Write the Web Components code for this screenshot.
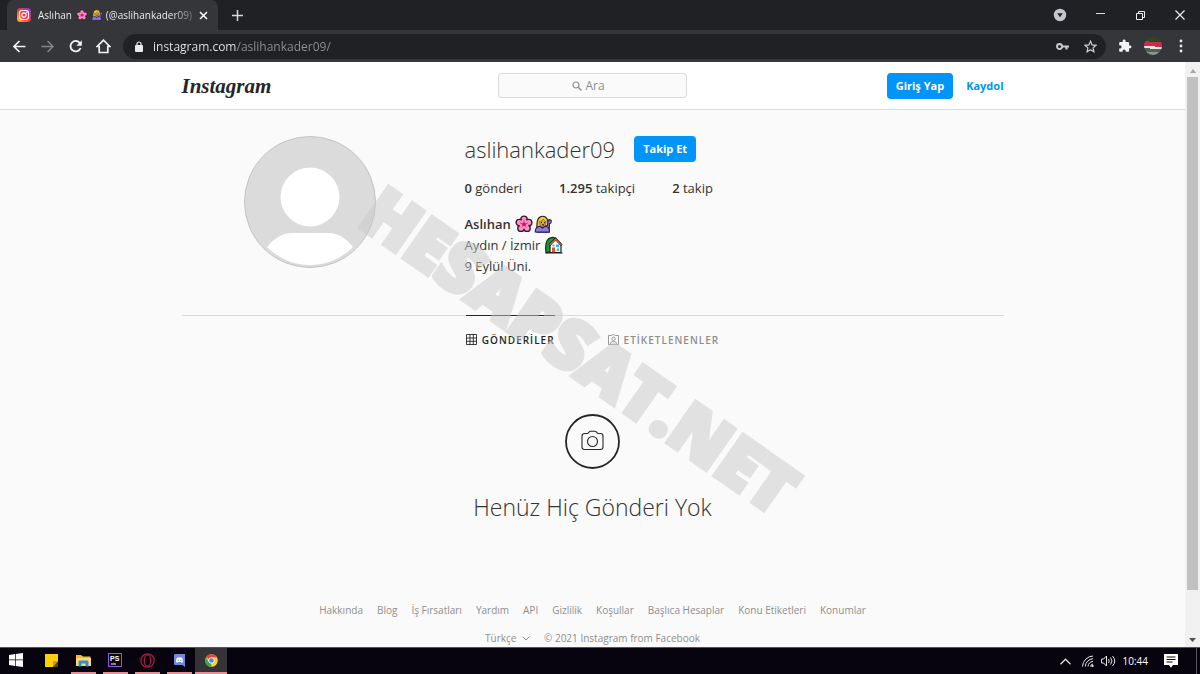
<!DOCTYPE html>
<html lang="tr">
<head>
<meta charset="utf-8">
<title>Aslıhan (@aslihankader09)</title>
<style>
html, body { margin: 0; height: 100%; }
body { font-family: "Open Sans", "Noto Sans", sans-serif; font-size: 13px; color: #333; }
</style>
</head>
<body>
<desktop-shell>
  <browser-tabs slot="top"></browser-tabs>
  <browser-toolbar slot="top"></browser-toolbar>
  <web-view>
    <ig-header></ig-header>
    <ig-profile></ig-profile>
    <ig-tabs></ig-tabs>
    <empty-state>Henüz Hiç Gönderi Yok</empty-state>
    <ig-footer></ig-footer>
    <water-mark slot="overlay">HESAPSAT.NET</water-mark>
  </web-view>
  <task-bar slot="bottom"></task-bar>
</desktop-shell>
<script>
const define = (name, markup) => {
  const template = document.createElement('template');
  template.innerHTML = '<style>*{box-sizing:border-box}svg{display:block;flex:none}button,input,select{font-family:inherit}a{text-decoration:none;color:inherit}</style>' + markup;
  customElements.define(name, class extends HTMLElement {
    constructor() {
      super();
      this.attachShadow({ mode: 'open' }).append(template.content.cloneNode(true));
    }
  });
};

define('desktop-shell', `
<style>
:host{display:flex;flex-direction:column;height:100vh;overflow:hidden}
main{flex:1;min-height:0;display:flex}
</style>
<slot name="top"></slot><main><slot></slot></main><slot name="bottom"></slot>`);

const emoji = {
  flower: `<svg viewBox="0 0 18 18" width="100%" height="100%"><g fill="#f990c8" stroke="#3a1a2c" stroke-width="1.4"><circle cx="9" cy="4.3" r="3.2"/><circle cx="13.7" cy="7.6" r="3.2"/><circle cx="12" cy="13.2" r="3.2"/><circle cx="6" cy="13.2" r="3.2"/><circle cx="4.3" cy="7.6" r="3.2"/></g><circle cx="9" cy="9.2" r="4.6" fill="#f990c8"/><circle cx="9" cy="9.2" r="2" fill="#e0115f"/><path d="M9 5v2M13 8l-2 .7M11.500 12.500l-1.200-1.600M6.500 12.500l1.200-1.600M5 8l2 .7" stroke="#e0408f"/></svg>`,
  woman: `<svg viewBox="0 0 18 18" width="100%" height="100%" stroke="#2a2433" stroke-width="1.100"><path d="M13.500 7l1.500-2.500 2.300.8-.4 2.700-1.400.8-.5 8.400H3.300z" fill="#8a6bf0"/><path d="M2.800 13C2.800 6 3.600 1.200 8.500 1.200s6 4.800 5 9.300L8 12z" fill="#fbcf1f"/><path d="M1.200 17c0-4 1.300-5.500 4.800-5.700l2.500 1.800 2.500-1.800c3 0 4.500 2 4.500 5.700z" fill="#8d78f5"/><path d="M5.500 6.500C8 6 9 5 9.500 4c.5 1.500 1.500 2 2.400 2.500 0 3-1 5.500-3.200 5.500S5.500 9.500 5.500 6.500z" fill="#d9a35f" stroke-width=".5"/><path d="M7 7.700h1M10 7.700h1M8 9.900h2" stroke-width="1.200"/></svg>`,
  house: `<svg viewBox="0 0 18 18" width="100%" height="100%"><path d="M1 16.500C0 9 .8 3 6 1.700c3-.9 6 1 6 4l-3 10z" fill="#119c37" stroke="#172c1b" stroke-width="1.200"/><path d="M5 9l5.500-5.500L16 9v7.500H5z" fill="#fff" stroke="#1c1c1c" stroke-width="1.200"/><path d="M4.200 9.200l6.300-6.600 6.300 6.600" fill="none" stroke="#1c1c1c" stroke-width="2.200"/><path d="M4.500 9.200l6-6.200 6 6.200" fill="none" stroke="#f05f35" stroke-width="1.200"/><path d="M11 8.500h3v2.500h-3zM12 12.500h2v2.500h-2z" fill="#29b9ee"/><path d="M7 11.500h3v5H7z" fill="#ec4d2d"/><path d="M7.500 8.500h2v2h-2z" fill="#29b9ee"/><path d="M.5 17h17" stroke="#1c1c1c"/></svg>`
};
for (const [name, svg] of Object.entries(emoji))
  define('emoji-' + name, `<style>:host{display:inline-block;width:var(--emoji,18px);height:var(--emoji,18px);vertical-align:var(--emoji-drop,-4px);margin-left:1px}</style>${svg}`);

define('browser-tabs', `
<style>
:host{display:flex;height:30px;background:#202124;color:#e8eaed;align-items:stretch;font-size:10px}
.tab{display:flex;align-items:center;gap:7px;width:211px;margin-left:7px;padding:0 10px;background:#35363a;border-radius:7px 7px 0 0}
.title{flex:1;min-width:0;white-space:nowrap;overflow:hidden;--emoji:12px;--emoji-drop:-2px;-webkit-mask-image:linear-gradient(90deg,#000 86%,#0005)}
button{border:0;background:none;padding:0;color:inherit;display:grid;place-items:center}
.new{width:38px}
.window{margin-left:auto;display:flex;align-items:center}
.window button{width:40px;height:26px}
</style>
<div class="tab">
 <svg width="14" height="14" viewBox="0 0 14 14" aria-hidden="true"><defs><linearGradient id="g" x1="0" y1="1" x2="1" y2="0"><stop stop-color="#ffc83c"/><stop offset=".5" stop-color="#f2353f"/><stop offset="1" stop-color="#8c35d8"/></linearGradient></defs><rect width="14" height="14" rx="3.500" fill="url(#g)"/><g fill="none" stroke="#fff" stroke-width="1.100"><rect x="2.500" y="2.500" width="9" height="9" rx="2.500"/><circle cx="7" cy="7" r="2.100"/></g><circle cx="9.800" cy="4.200" r=".7" fill="#fff"/></svg>
 <span class="title">Aslıhan <emoji-flower></emoji-flower> <emoji-woman></emoji-woman> (@aslihankader09)</span>
 <button aria-label="Sekmeyi kapat"><svg width="9" height="9" viewBox="0 0 9 9"><path d="M1 1l7 7M8 1l-7 7" stroke="#fff" stroke-width="1.500"/></svg></button>
</div>
<button class="new" aria-label="Yeni sekme"><svg width="11" height="11" viewBox="0 0 11 11"><path d="M5.500 0v11M0 5.500h11" stroke="#d8d9dc" stroke-width="1.500"/></svg></button>
<div class="window">
 <button aria-label="Sekmelerde ara"><svg width="14" height="14" viewBox="0 0 14 14"><circle cx="7" cy="7" r="6.200" fill="#c3c6cb"/><path d="M4.200 5.300h5.600L7 9.200z" fill="#202124"/></svg></button>
 <button aria-label="Küçült"><svg width="9" height="9" viewBox="0 0 9 9"><path d="M0 2.500h9" stroke="#ddd"/></svg></button>
 <button aria-label="Geri yükle"><svg width="9" height="9" viewBox="0 0 9 9"><path d="M.5 2.500h6v6h-6zM2.500 2.500v-2h6v6h-2" fill="none" stroke="#eee"/></svg></button>
 <button aria-label="Kapat"><svg width="10" height="10" viewBox="0 0 10 10"><path d="M.5.5l9 9M9.500.5l-9 9" stroke="#eee" stroke-width="1.200"/></svg></button>
</div>`);

define('browser-toolbar', `
<style>
:host{display:flex;height:32px;background:#35363a;align-items:center;padding:0 5px;flex:none}
button{border:0;background:none;padding:0;width:28px;height:28px;display:grid;place-items:center;flex:none}
.url{flex:1;margin:0 5px 0 6px;display:flex;align-items:center;height:25px;border-radius:13px;background:#202124;padding:0 2px 0 12px}
input{flex:1;min-width:0;border:0;outline:0;padding:0;margin:0 10px;font-size:12px;color:transparent;background:linear-gradient(90deg,#e8eaed 84px,#8f9296 84px);-webkit-background-clip:text;background-clip:text}
.url button{margin-left:7px}
.photo{width:18px;height:18px;border-radius:50%;background:linear-gradient(4deg,#8b9594 18%,#4b6355 18% 36%,#eee3dc 36% 48%,#c82d50 48% 72%,#2b4a1b 72%)}
</style>
<button aria-label="Geri"><svg width="13" height="13" viewBox="0 0 13 13"><path d="M12.500 6.500H1.500M6.500 1L1 6.500 6.500 12" fill="none" stroke="#f1f3f4" stroke-width="1.700"/></svg></button>
<button aria-label="İleri"><svg width="13" height="13" viewBox="0 0 13 13"><path d="M.5 6.500h11M6.500 1L12 6.500 6.500 12" fill="none" stroke="#85878a" stroke-width="1.500"/></svg></button>
<button aria-label="Yenile"><svg width="13" height="13" viewBox="0 0 13 13"><path d="M11 3.200A5.200 5.200 0 1 0 11.600 8" fill="none" stroke="#f1f3f4" stroke-width="1.800"/><path d="M12.800.3v5.500H7.300z" fill="#f1f3f4"/></svg></button>
<button aria-label="Ana sayfa"><svg width="15" height="15" viewBox="0 0 15 15"><path d="M7.500 1.200L1.200 7.500h2v6h8.600v-6h2z" fill="none" stroke="#f1f3f4" stroke-width="1.700"/></svg></button>
<div class="url">
 <svg width="8" height="11" viewBox="0 0 8 11"><rect y="4" width="8" height="7" rx="1" fill="#e8eaed"/><path d="M2 4.500V3a2 2 0 0 1 4 0v1.500" fill="none" stroke="#e8eaed" stroke-width="1.200"/></svg>
 <input aria-label="Adres" value="instagram.com/aslihankader09/" spellcheck="false">
 <svg width="13" height="9" viewBox="0 0 13 9"><circle cx="3.500" cy="4.500" r="2.500" fill="none" stroke="#c8cacd" stroke-width="1.900"/><path d="M6 4.500h7M10.500 4.500v3" stroke="#c8cacd" stroke-width="2.100"/></svg>
 <button aria-label="Yer işareti ekle"><svg width="13" height="13" viewBox="0 0 13 13"><path d="M6.500 1.300l1.600 3.600 3.900.4-2.900 2.600.8 3.800-3.400-2-3.400 2 .8-3.800L1 5.300l3.900-.4z" fill="none" stroke="#d0d2d5" stroke-width="1.200"/></svg></button>
</div>
<button aria-label="Uzantılar"><svg width="14" height="14" viewBox="0 0 24 24"><path d="M20.500 11H19V7a2 2 0 0 0-2-2h-4V3.500a2.500 2.500 0 0 0-5 0V5H4a2 2 0 0 0-2 2v3.800h1.500a2.700 2.700 0 0 1 0 5.400H2V20c0 1.100.9 2 2 2h3.800v-1.500a2.700 2.700 0 0 1 5.400 0V22H17a2 2 0 0 0 2-2v-4h1.500a2.500 2.500 0 0 0 0-5z" fill="#f1f3f4"/></svg></button>
<button aria-label="Profil"><span class="photo"></span></button>
<button aria-label="Menü"><svg width="4" height="14" viewBox="0 0 4 14" fill="#e8eaed"><circle cx="2" cy="2" r="1.400"/><circle cx="2" cy="7" r="1.400"/><circle cx="2" cy="12" r="1.400"/></svg></button>`);

define('web-view', `
<style>
:host{flex:1;min-width:0;display:flex;background:#fafafa}
.page{flex:1;min-width:0;overflow:hidden;position:relative;display:flex;flex-direction:column}
.bar{width:15px;background:#f1f1f1;display:flex;flex-direction:column;align-items:center;justify-content:space-between;padding:7px 0 5px}
.thumb{flex:1;width:11px;margin:4px 0 48px;background:#c1c1c1}
</style>
<div class="page"><slot></slot><slot name="overlay"></slot></div>
<div class="bar"><svg width="6" height="4" viewBox="0 0 6 4"><path d="M0 4l3-4 3 4z" fill="#a3a3a3"/></svg><div class="thumb"></div><svg width="7" height="4" viewBox="0 0 7 4"><path d="M0 0h7L3.500 4z" fill="#505050"/></svg></div>`);

define('ui-button', `
<style>
:host{display:inline-block}
button{border:0;border-radius:4px;background:#0095f6;color:#fff;font-size:11px;font-weight:700;line-height:18px;padding:4px 9px;display:block;white-space:nowrap}
</style><button><slot></slot></button>`);

define('ig-header', `
<style>
:host{display:block;flex:none;background:#fff;border-bottom:1px solid #dbdbdb}
nav{max-width:822px;height:47px;margin:0 auto;display:grid;grid-template-columns:1fr 189px 1fr;align-items:center}
.logo{font:italic 700 21px/30px "Liberation Serif",serif;color:#262626}
.search{position:relative;display:block}
.search input{display:block;width:100%;height:25px;border:1px solid #dbdbdb;border-radius:3px;background:#fafafa;text-align:center;padding:0 0 0 5px;font-size:12px;outline:0}
.search input::placeholder{color:#8e8e8e;opacity:1}
.search svg{position:absolute;left:calc(50% - 21px);top:8px}
.actions{display:flex;justify-content:flex-end;align-items:center;gap:13px;color:#0095f6;font-size:11px;font-weight:700}
</style>
<nav>
<a class="logo" href="#">Instagram</a>
<label class="search"><input type="text" aria-label="Ara" placeholder="Ara"><svg width="10" height="10" viewBox="0 0 10 10"><circle cx="4" cy="4" r="3" fill="none" stroke="#8e8e8e" stroke-width="1.200"/><path d="M6.200 6.200L9.500 9.500" stroke="#8e8e8e" stroke-width="1.400"/></svg></label>
<div class="actions"><ui-button>Giriş Yap</ui-button><a href="#">Kaydol</a></div>
</nav>`);

define('ig-stat', `<style>:host{display:block}::slotted(b){font-weight:600}</style><slot></slot>`);

define('ig-profile', `
<style>
:host{display:block;flex:none}
header{max-width:822px;margin:0 auto;padding:26px 0 38px;display:grid;grid-template-columns:257px 1fr;column-gap:26px}
.avatar{justify-self:center}
.top{display:flex;align-items:center;gap:19px;height:26px;margin-bottom:16px}
h1{margin:0;font-size:22px;font-weight:300;line-height:30px}
.stats{display:flex;gap:37px;line-height:20px;margin-bottom:16px}
.bio{line-height:21px}
.bio strong{font-weight:600}
section{min-width:0}
</style>
<header>
<svg class="avatar" width="132" height="132" viewBox="0 0 132 132" role="img" aria-label="Profil fotoğrafı"><circle cx="66" cy="66" r="65.500" fill="#dbdbdb" stroke="#c4c4c4"/><circle cx="66" cy="61" r="29.500" fill="#fff"/><path d="M23 111C31 101 40 97 48 97H84C93 97 101 101 109 111C97 123 82 129 66 129S35 123 23 111z" fill="#fff"/></svg>
<section>
<div class="top"><h1>aslihankader09</h1><ui-button>Takip Et</ui-button></div>
<div class="stats"><ig-stat><b>0</b> gönderi</ig-stat><ig-stat><b>1.295</b> takipçi</ig-stat><ig-stat><b>2</b> takip</ig-stat></div>
<div class="bio"><strong>Aslıhan</strong> <emoji-flower></emoji-flower><emoji-woman></emoji-woman><br>Aydın / İzmir <emoji-house></emoji-house><br>9 Eylül Üni.</div>
</section>
</header>`);

define('ig-tabs', `
<style>
:host{display:block;flex:none}
nav{max-width:822px;margin:0 auto;border-top:1px solid #dbdbdb;display:flex;justify-content:center;gap:53px;font-size:10px;font-weight:600;letter-spacing:1px;color:#8e8e8e}
a{display:flex;align-items:center;gap:5px;height:48px;margin-top:-1px;border-top:1px solid transparent}
a.on{color:#262626;border-color:#262626}
</style>
<nav>
<a class="on" href="#"><svg width="11" height="11" viewBox="0 0 11 11"><path d="M.5.5h10v10H.5zM4 .5v10M7.300.5v10M.5 4h10M.5 7.300h10" fill="none" stroke="#262626" stroke-width=".9"/></svg>GÖNDERİLER</a>
<a href="#"><svg width="11" height="11" viewBox="0 0 11 11" fill="none" stroke="#8e8e8e" stroke-width=".9"><path d="M.5 1.500h3L5.500.4l2 1.100h3v9H.5zM2.500 10c0-2 1-2.500 3-2.500s3 .5 3 2.500"/><circle cx="5.500" cy="4.800" r="1.700"/></svg>ETİKETLENENLER</a>
</nav>`);

define('empty-state', `
<style>
:host{display:flex;flex:none;flex-direction:column;align-items:center;padding-top:51px;gap:22px}
h2{margin:0;font-size:23px;font-weight:300;line-height:32px}
</style>
<svg width="55" height="55" viewBox="0 0 55 55"><circle cx="27.500" cy="27.500" r="26.500" fill="none" stroke="#262626" stroke-width="1.800"/><path d="M20 19.500h2.200c1.400 0 1.800-2.200 3.300-2.200h4.500c1.500 0 1.900 2.200 3.300 2.200H35.500c1.600 0 2.500 1 2.500 2.500v11c0 1.600-1 2.500-2.500 2.500h-16C18 35.500 17 34.600 17 33V22c0-1.500 1-2.500 3-2.500z" fill="none" stroke="#262626" stroke-width="1.100"/><circle cx="27.500" cy="27.500" r="5" fill="none" stroke="#262626" stroke-width="1.100"/></svg>
<h2><slot></slot></h2>`);

define('ig-footer', `
<style>
:host{display:block;flex:none;padding-top:79px;font-size:10px;color:#8e8e8e;line-height:16px}
nav,.legal{display:flex;justify-content:center;gap:14px}
.legal{margin-top:12px}
label{display:flex;align-items:center;gap:5px}
select{appearance:none;border:0;background:none;color:inherit;font-size:10px;line-height:16px;padding:0;height:16px}
</style>
<nav><a href="#">Hakkında</a><a href="#">Blog</a><a href="#">İş Fırsatları</a><a href="#">Yardım</a><a href="#">API</a><a href="#">Gizlilik</a><a href="#">Koşullar</a><a href="#">Başlıca Hesaplar</a><a href="#">Konu Etiketleri</a><a href="#">Konumlar</a></nav>
<div class="legal"><label><select aria-label="Dil"><option>Türkçe</option></select><svg width="8" height="5" viewBox="0 0 8 5"><path d="M.5.5L4 4 7.500.5" fill="none" stroke="#8e8e8e"/></svg></label><span>© 2021 Instagram from Facebook</span></div>`);

define('water-mark', `
<style>
:host{position:absolute;left:calc(50% - 12px);top:calc(50% - 6px);transform:translate(-50%,-50%) rotate(35deg);pointer-events:none;white-space:nowrap;font:800 69px/80px "Open Sans",sans-serif;color:#cacaca;-webkit-text-stroke:5px #cacaca;opacity:.5}
</style><slot></slot>`);

define('task-bar', `
<style>
:host{display:flex;flex:none;height:27px;background:#08040f;color:#fff;align-items:stretch;font-size:10px;box-sizing:border-box;border-top:1px solid #55525a}
.apps,.tray{display:flex}
.apps button{width:32px;border:0;padding:0 0 2px;background:none;display:grid;place-items:center}
.apps button:first-child{width:35px;padding-right:4px}
.apps .run{background:linear-gradient(#e58f99,#e58f99) bottom/25px 2px no-repeat}
.apps .on{background:linear-gradient(#e58f99,#e58f99) bottom/100% 2px no-repeat,#343338}
.tray{margin-left:auto;align-items:center;gap:7px;padding-right:3px}
.tray .note{margin:0 11px 0 9px}
.edge{width:1px;height:100%;background:#55525a}
</style>
<div class="apps">
<button aria-label="Başlat"><svg width="14" height="14" viewBox="0 0 14 14" fill="#fff"><path d="M0 2l6-.9v5.500H0zM6.700 1L14 0v6.600H6.700zM0 7.300h6v5.600L0 12zM6.700 7.300H14V14l-7.300-1z"/></svg></button>
<button aria-label="Notlar"><svg width="13" height="13" viewBox="0 0 13 13"><path d="M0 0h13v8l-5 5H0z" fill="#ffcf0a"/><path d="M13 7v6H8z" fill="#47423a"/><path d="M8 7h5l-5 6z" fill="#d29a00"/></svg></button>
<button class="run" aria-label="Dosyalar"><svg width="15" height="13" viewBox="0 0 15 13"><path d="M0 1h5l2 1.500h7.500V12H0z" fill="#f3b73d"/><path d="M0 4h15v8H0z" fill="#ffd970"/><path d="M2.500 12.500V8c0-1 .5-1.500 1.500-1.500h7c1 0 1.500.5 1.500 1.500v4.500h-3V9.500h-4v3z" fill="#2b8fdc"/></svg></button>
<button class="run" aria-label="PhpStorm"><svg width="14" height="14" viewBox="0 0 14 14"><rect x=".5" y=".5" width="13" height="13" fill="#0b0710" stroke="#9558e0"/><text x="2" y="8" font-family="Liberation Sans" font-weight="700" font-size="7" fill="#fff">PS</text><path d="M3 11h5" stroke="#fff"/></svg></button>
<button class="run" aria-label="Opera GX"><svg width="15" height="15" viewBox="0 0 15 15" fill="none" stroke="#a51d42"><circle cx="7.500" cy="7.500" r="6.600" stroke-width="1.300"/><ellipse cx="7.500" cy="7.500" rx="3.200" ry="5.600" stroke-width="1.300"/></svg></button>
<button class="run" aria-label="Discord"><svg width="11" height="13" viewBox="0 0 11 13"><path d="M0 1.500C0 .5.500 0 1.500 0H11v13l-2.500-2h-7C.5 11 0 10.500 0 9.500z" fill="#7289da"/><path d="M2 8c0-2.500.5-4 1.500-4.500h4C8.500 4 9 5.500 9 8L7.500 8.700 7 8H4l-.5.700z" fill="#fff"/><circle cx="4.200" cy="6.200" r=".7" fill="#7289da"/><circle cx="6.800" cy="6.200" r=".7" fill="#7289da"/></svg></button>
<button class="on" aria-label="Chrome"><svg width="13" height="13" viewBox="0 0 14 14"><circle cx="7" cy="7" r="6.800" fill="#fc3"/><path d="M7 7L1.100 3.600A6.800 6.800 0 0 1 12.900 3.600H7z" fill="#e8453c"/><path d="M1.100 3.600L4 8.700 7 10.500 6.300 13.800A6.800 6.800 0 0 1 1.100 3.600z" fill="#35a853"/><circle cx="7" cy="7" r="3.200" fill="#fff"/><circle cx="7" cy="7" r="2.500" fill="#4285f4"/></svg></button>
</div>
<div class="tray">
<svg width="11" height="7" viewBox="0 0 11 7"><path d="M.5 6.200l5-5 5 5" fill="none" stroke="#ddd" stroke-width="1.300"/></svg>
<svg width="16" height="12" viewBox="-4 0 16 12" fill="none" stroke="#e8e8e8"><path d="M.5 11.500A11 11 0 0 1 11 1M3.200 11.500A8.500 8.500 0 0 1 11 3.700M6 11.500A5.500 5.500 0 0 1 11 6.500M8.500 11.500A3 3 0 0 1 11 9"/><circle cx="10.500" cy="11" r=".8" fill="#fff"/></svg>
<svg width="15" height="12" viewBox="0 0 15 12" fill="none" stroke="#e8e8e8"><path d="M.6 4h2L5.500 1v10L2.600 8h-2zM7.500 4q1.500 2 0 4M9.500 2.500q3 3.500 0 7M11.500 1q4.500 5 0 10"/></svg>
<span>10:44</span>
<svg class="note" width="14" height="14" viewBox="0 0 14 14"><path d="M0 0h14v11H9l-2 2.800L5 11H0z" fill="#fff"/><path d="M2.500 3h9M2.500 5.500h9M2.500 8h6" stroke="#08040f"/></svg>
<span class="edge"></span>
</div>`);
</script>
</body>
</html>
